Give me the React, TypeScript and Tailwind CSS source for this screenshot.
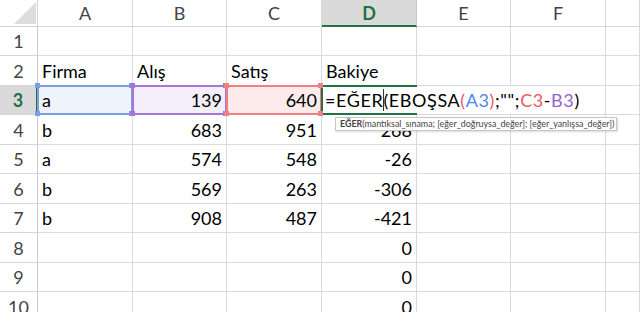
import React from "react";

type Cell = { v?: string; num?: boolean };

const rows: Cell[][] = [
  [{}, {}, {}, {}, {}, {}, {}],
  [{ v: "Firma" }, { v: "Alış" }, { v: "Satış" }, { v: "Bakiye" }, {}, {}, {}],
  [{ v: "a" }, { v: "139", num: true }, { v: "640", num: true }, {}, {}, {}, {}],
  [{ v: "b" }, { v: "683", num: true }, { v: "951", num: true }, { v: "268", num: true }, {}, {}, {}],
  [{ v: "a" }, { v: "574", num: true }, { v: "548", num: true }, { v: "-26", num: true }, {}, {}, {}],
  [{ v: "b" }, { v: "569", num: true }, { v: "263", num: true }, { v: "-306", num: true }, {}, {}, {}],
  [{ v: "b" }, { v: "908", num: true }, { v: "487", num: true }, { v: "-421", num: true }, {}, {}, {}],
  [{}, {}, {}, { v: "0", num: true }, {}, {}, {}],
  [{}, {}, {}, { v: "0", num: true }, {}, {}, {}],
  [{}, {}, {}, { v: "0", num: true }, {}, {}, {}],
];

const cols = ["A", "B", "C", "D", "E", "F", ""];

function Handles({ color }: { color: string }) {
  const base = "absolute w-[5px] h-[5px] z-20 " + color;
  return (
    <>
      <div className={base + " -left-[3px] -top-[3px]"} />
      <div className={base + " -right-[2px] -top-[3px]"} />
      <div className={base + " -left-[3px] -bottom-[2px]"} />
      <div className={base + " -right-[2px] -bottom-[2px]"} />
    </>
  );
}

export default function App() {
  return (
    <div
      className="w-[640px] h-[312px] overflow-hidden bg-white relative"
      style={{ fontFamily: "Lato, 'Open Sans', sans-serif" }}
    >
      <div className="grid grid-cols-[38px_95px_94px_95px_95px_94px_95px_1fr] grid-rows-[27px_29px_30px_29px_30px_29px_30px_29px_30px_29px_30px] text-[18px] leading-[22px] text-black">
        {/* header row */}
        <div className="relative border-r border-b border-[#d0d0d0] bg-white">
          <svg className="absolute left-[14px] top-[2px]" width="22" height="22" viewBox="0 0 22 22">
            <polygon points="22,0 22,22 0,22" fill="#dcdcdc" />
          </svg>
        </div>
        {cols.map((c, i) =>
          c === "D" ? (
            <div
              key={i}
              className="flex items-center justify-center bg-[#dadada] border-b-2 border-b-[#217346] border-r border-r-[#c8c8c8] text-[#217346] font-bold"
            >
              {c}
            </div>
          ) : (
            <div
              key={i}
              className="flex items-center justify-center bg-white border-r border-b border-[#d6d6d6] text-[#444]"
            >
              {c}
            </div>
          )
        )}

        {rows.map((r, ri) => {
          const rn = ri + 1;
          const sel = rn === 3;
          return (
            <React.Fragment key={ri}>
              <div
                className={
                  "flex items-center justify-center border-b border-[#d6d6d6] " +
                  (sel
                    ? "bg-[#dadada] border-r-2 border-r-[#217346] text-[#217346] font-bold"
                    : "bg-white border-r border-r-[#c8c8c8] text-[#444]")
                }
              >
                {rn}
              </div>
              {r.map((cell, ci) => {
                if (sel && ci === 0) {
                  return (
                    <div key={ci} className="relative flex items-end pl-[4px] pb-[3px] bg-[#eef3fc] border-r border-b border-[#dadada]">
                      <div className="absolute -left-[1px] -top-[1px] -right-[1px] -bottom-[1px] border-2 border-[#7a9ee6] pointer-events-none" />
                      <Handles color="bg-[#7a9ee6]" />
                      <span className="relative">{cell.v}</span>
                    </div>
                  );
                }
                if (sel && ci === 1) {
                  return (
                    <div key={ci} className="relative flex items-end justify-end pr-[4px] pb-[3px] bg-[#f3eefa] border-r border-b border-[#dadada]">
                      <div className="absolute -left-[1px] -top-[1px] -right-[1px] -bottom-[1px] border-2 border-[#a377d6] pointer-events-none" />
                      <Handles color="bg-[#a377d6]" />
                      <span className="relative">{cell.v}</span>
                    </div>
                  );
                }
                if (sel && ci === 2) {
                  return (
                    <div key={ci} className="relative flex items-end justify-end pr-[4px] pb-[3px] bg-[#fdeaea] border-r border-b border-[#dadada]">
                      <div className="absolute -left-[1px] -top-[1px] -right-[1px] -bottom-[1px] border-2 border-[#f08080] pointer-events-none" />
                      <Handles color="bg-[#f08080]" />
                      <span className="relative">{cell.v}</span>
                    </div>
                  );
                }
                if (sel && ci === 3) {
                  return (
                    <div key={ci} className="relative border-r border-b border-[#dadada] z-10">
                      <div className="absolute left-[1px] top-0 bottom-0 w-[266px] bg-white" />
                      <div className="absolute -left-[1px] -top-[1px] w-[96px] h-[2px] bg-[#217346]" />
                      <div className="absolute -left-[1px] -bottom-[1px] w-[96px] h-[2px] bg-[#217346]" />
                      <div className="absolute -left-[1px] -top-[1px] -bottom-[1px] w-[2px] bg-[#217346]" />
                      <div className="absolute left-[3px] bottom-[3px] whitespace-nowrap tracking-[0.6px]">
                        <span>=EĞER</span>
                        <span className="inline-block w-[1px] h-[22px] bg-[#333] align-bottom -mr-[1px]" />
                        <span>(EBOŞSA</span>
                        <span className="text-[#ec5a62]">(</span>
                        <span className="text-[#4d86ee]">A3</span>
                        <span className="text-[#ec5a62]">)</span>
                        <span>;"";</span>
                        <span className="text-[#ec5a62]">C3</span>
                        <span>-</span>
                        <span className="text-[#9561d4]">B3</span>
                        <span>)</span>
                      </div>
                    </div>
                  );
                }
                return (
                  <div
                    key={ci}
                    className={
                      "flex items-end pb-[3px] border-r border-b border-[#dadada] whitespace-nowrap " +
                      (cell.num ? "justify-end pr-[4px]" : "pl-[4px]")
                    }
                  >
                    {cell.v}
                  </div>
                );
              })}
            </React.Fragment>
          );
        })}
      </div>

      {/* tooltip */}
      <div className="absolute left-[335px] top-[117px] w-[282px] h-[14px] bg-white border border-[#c6c6c6] shadow-[1px_1px_2px_rgba(0,0,0,0.15)] z-30 flex items-center pl-[4px] text-[8.9px] leading-none text-[#444] whitespace-nowrap overflow-hidden">
        <span className="font-bold">EĞER</span>
        <span>(mantıksal_sınama; [eğer_doğruysa_değer]; [eğer_yanlışsa_değer])</span>
      </div>
    </div>
  );
}
